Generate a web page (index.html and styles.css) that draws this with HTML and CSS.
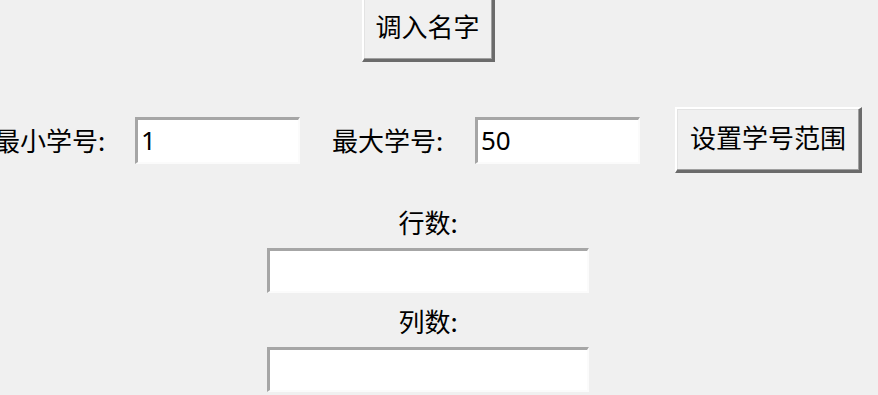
FILE: index.html
```html
<!DOCTYPE html>
<html lang="zh">
<head>
<meta charset="utf-8">
<title>点名</title>
<link rel="stylesheet" href="styles.css">
</head>
<body>
<div class="app">
  <button class="btn btn-load">调入名字</button>
  <div class="range-row">
    <span class="label label-min">最小学号:</span>
    <div class="entry entry-small"><span class="entry-text">1</span></div>
    <span class="label label-max">最大学号:</span>
    <div class="entry entry-small"><span class="entry-text">50</span></div>
    <button class="btn btn-range">设置学号范围</button>
  </div>
  <span class="label label-rows">行数:</span>
  <div class="entry entry-wide"></div>
  <span class="label label-cols">列数:</span>
  <div class="entry entry-wide"></div>
</div>
</body>
</html>
```
FILE: styles.css
```css
html, body {
  margin: 0;
  padding: 0;
  background: #f0f0f0;
  overflow: hidden;
}
body {
  width: 878px;
  height: 395px;
  font-family: "Noto Sans CJK SC", "Noto Sans", sans-serif;
  color: #000;
}
.app {
  width: 856px;
  display: flex;
  flex-direction: column;
  align-items: center;
}
.btn {
  box-sizing: border-box;
  font-family: "Noto Sans CJK SC", sans-serif;
  font-size: 26px;
  line-height: 30px;
  color: #000;
  background: #f0f0f0;
  border-style: solid;
  border-width: 2px 3px 3px 2px;
  border-color: #ffffff #6b6b6b #6b6b6b #ffffff;
  box-shadow: inset -1px -1px 0 #a0a0a0, inset 1px 1px 0 #e3e3e3;
  padding: 0 0 6px 0;
  margin: 0;
  display: flex;
  align-items: center;
  justify-content: center;
  cursor: default;
}
.btn-load {
  width: 133px;
  height: 66px;
  margin-top: -4px;
}
.range-row {
  display: flex;
  align-items: center;
  margin-top: 45px;
  height: 66px;
  width: 868px;
  flex: none;
}
.label {
  font-size: 26px;
  line-height: 30px;
  white-space: nowrap;
}
.label-min {
  width: 111px;
  margin-right: 30px;
  text-align: right;
}
.label-max {
  width: 113px;
  margin-left: 32px;
  margin-right: 30px;
}
.entry {
  box-sizing: border-box;
  background: #fff;
  border-style: solid;
  border-width: 3px 2px 2px 3px;
  border-color: #a6a6a6 #fbfbfb #fbfbfb #a6a6a6;
  display: flex;
  align-items: center;
}
.entry-small {
  width: 165px;
  height: 47px;
}
.entry-text {
  font-family: "Noto Sans", "Open Sans", sans-serif;
  font-size: 26px;
  line-height: 30px;
  padding-left: 3px;
  padding-bottom: 2px;
}
.btn-range {
  width: 187px;
  height: 66px;
  margin-left: 35px;
}
.label-rows {
  margin-top: 34px;
}
.entry-wide {
  width: 322px;
  height: 45px;
  margin-top: 11px;
}
.label-cols {
  margin-top: 13px;
}
```
